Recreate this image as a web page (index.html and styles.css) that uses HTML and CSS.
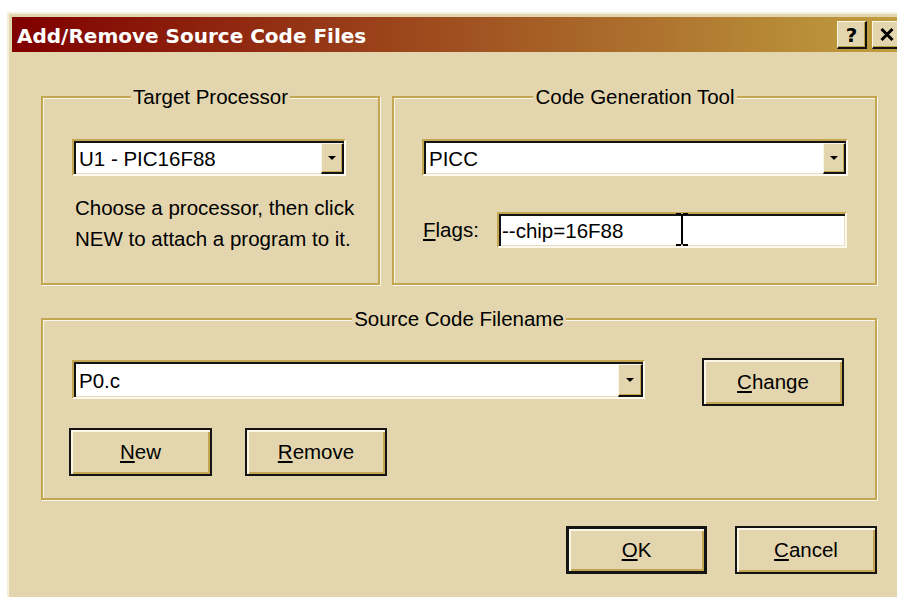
FILE: index.html
```html
<!DOCTYPE html>
<html lang="en">
<head>
<meta charset="utf-8">
<title>Add/Remove Source Code Files</title>
<link rel="stylesheet" href="styles.css">
</head>
<body>
<div class="window">
  <div class="titlebar">
    <span class="title">Add/Remove Source Code Files</span>
    <div class="title-buttons">
      <span class="tbtn tbtn-help">?</span>
      <span class="tbtn tbtn-close">
        <svg width="14" height="13" viewBox="0 0 14 13"><path d="M1.5 1 L12.5 12 M12.5 1 L1.5 12" stroke="#000" stroke-width="3" fill="none"/></svg>
      </span>
    </div>
  </div>

  <div class="client">
    <div class="row-top">
      <fieldset class="group group-target">
        <legend>Target Processor</legend>
        <div class="combo combo-target">
          <span class="combo-text">U1 - PIC16F88</span>
          <span class="drop"><svg width="8" height="4" viewBox="0 0 8 4"><path d="M0 0 H8 L4 4 Z" fill="#000"/></svg></span>
        </div>
        <p class="hint">Choose a processor, then click<br>NEW to attach a program to it.</p>
      </fieldset>

      <fieldset class="group group-tool">
        <legend>Code Generation Tool</legend>
        <div class="combo combo-tool">
          <span class="combo-text">PICC</span>
          <span class="drop"><svg width="8" height="4" viewBox="0 0 8 4"><path d="M0 0 H8 L4 4 Z" fill="#000"/></svg></span>
        </div>
        <div class="flags-row">
          <label class="flags-label"><u>F</u>lags:</label>
          <div class="field">
            <span class="field-text">--chip=16F88</span>
            <svg class="ibeam" width="14" height="33" viewBox="0 0 14 33"><path d="M1 1 H6 M8 1 H13 M7 1.5 V31.5 M1 32 H6 M8 32 H13" stroke="#000" stroke-width="2" fill="none"/></svg>
          </div>
        </div>
      </fieldset>
    </div>

    <fieldset class="group group-source">
      <legend>Source Code Filename</legend>
      <div class="source-row">
        <div class="combo combo-source">
          <span class="combo-text">P0.c</span>
          <span class="drop drop-wide"><svg width="8" height="4" viewBox="0 0 8 4"><path d="M0 0 H8 L4 4 Z" fill="#000"/></svg></span>
        </div>
        <button class="btn btn-change"><u>C</u>hange</button>
      </div>
      <div class="source-actions">
        <button class="btn btn-new"><u>N</u>ew</button>
        <button class="btn btn-remove"><u>R</u>emove</button>
      </div>
    </fieldset>

    <div class="dialog-actions">
      <button class="btn btn-default"><u>O</u>K</button>
      <button class="btn btn-cancel"><u>C</u>ancel</button>
    </div>
  </div>
</div>
</body>
</html>
```

FILE: styles.css
```css
html, body {
  margin: 0;
  height: 100%;
  overflow: hidden;
  background: #ffffff;
}

body {
  box-sizing: border-box;
  padding: 12px 0 0 7px;
  font-family: "Liberation Sans", Arial, sans-serif;
  font-size: 20.5px;
  color: #000;
}

/* dialog frame, continuing past the right and bottom edges */
.window {
  box-sizing: border-box;
  width: 890px;
  height: 585px;
  background: #e3d6ae;
  border-top: 2px solid #f6efdc;
  border-left: 2px solid #f6efdc;
  padding: 3px 0 0 3px;
  display: flex;
  flex-direction: column;
  overflow: hidden;
}

.titlebar {
  box-sizing: border-box;
  width: 893px;
  height: 35px;
  flex: none;
  padding: 0 3px 0 5px;
  background: linear-gradient(to right, #800000, #c0a040);
  display: flex;
  align-items: center;
  justify-content: space-between;
}

.title {
  color: #fff;
  font-family: "DejaVu Sans", Verdana, sans-serif;
  font-weight: bold;
  font-size: 20px;
  line-height: 1;
  margin-top: 2px;
}

.title-buttons {
  display: flex;
  gap: 5px;
  margin-top: 1px;
}

.tbtn {
  box-sizing: border-box;
  width: 30px;
  height: 28px;
  background: #e3d6ae;
  border-style: solid;
  border-width: 1px 2px 2px 1px;
  border-color: #fbf6e6 #111 #111 #fbf6e6;
  box-shadow: inset -1px -1px 0 #c0a040;
  display: flex;
  align-items: center;
  justify-content: center;
  font-family: "DejaVu Sans", Verdana, sans-serif;
  font-weight: bold;
  font-size: 20px;
  line-height: 1;
}

/* client area */
.client {
  width: 836px;
  padding: 34px 0 0 29px;
  display: flex;
  flex-direction: column;
}

.row-top {
  display: flex;
  gap: 12px;
}

.group {
  box-sizing: border-box;
  margin: 0;
  min-width: 0;
  border: 2px solid #c4a650;
  box-shadow: inset 1px 1px 0 #fbf7ea, 1px 1px 0 #fbf7ea;
}

.group legend {
  margin: 0 auto;
  padding: 0 2px;
  line-height: 22px;
  font-size: 20.5px;
  background: #e3d6ae;
}

.group-target {
  width: 339px;
  height: 199px;
  padding: 31px 29px 0;
}

.group-tool {
  width: 485px;
  height: 199px;
  padding: 31px 27px 0 28px;
}

.group-source {
  width: 836px;
  height: 192px;
  margin-top: 23px;
  padding: 28px 26px 0;
}

/* sunken combo boxes and edit fields */
.combo,
.field {
  box-sizing: border-box;
  background: #fff;
  border: 2px solid;
  border-color: #c4a650 #fdf9ee #fdf9ee #c4a650;
  box-shadow: inset 2px 2px 0 #141414, inset -1px -1px 0 #e8ddc0;
  padding: 2px 0 0 2px;
  display: flex;
  align-items: stretch;
}

.combo {
  height: 37px;
}

.combo-target {
  width: 274px;
}

.combo-tool {
  width: 426px;
}

.combo-source {
  width: 573px;
  height: 39px;
  margin: 2px 0 0 3px;
}

.combo-text {
  flex: 1;
  display: flex;
  align-items: center;
  padding-left: 3px;
  white-space: nowrap;
}

.drop {
  box-sizing: border-box;
  width: 23px;
  flex: none;
  background: #e3d6ae;
  border-style: solid;
  border-width: 1px 2px 2px 1px;
  border-color: #fbf6e6 #111 #111 #fbf6e6;
  box-shadow: inset -1px -1px 0 #c4a650;
  display: flex;
  align-items: center;
  justify-content: center;
}

.drop-wide {
  width: 25px;
}

.hint {
  margin: 16px 0 0 3px;
  line-height: 31px;
  white-space: nowrap;
}

.flags-row {
  display: flex;
  align-items: center;
  margin-top: 36px;
}

.flags-label {
  width: 75px;
  padding-left: 1px;
  box-sizing: border-box;
}

.field {
  position: relative;
  width: 350px;
  height: 36px;
}

.field-text {
  display: flex;
  align-items: center;
  padding-left: 1px;
}

/* text cursor resting over the flags field */
.ibeam {
  position: absolute;
  left: 176px;
  top: -1px;
}

/* push buttons */
.btn {
  box-sizing: border-box;
  height: 48px;
  margin: 0;
  padding: 0;
  background: #e3d6ae;
  border: 2px solid #141414;
  box-shadow: inset 2px 2px 0 #fbf6e6, inset -2px -2px 0 #c4a650;
  font-family: "Liberation Sans", Arial, sans-serif;
  font-size: 20.5px;
  color: #000;
}

.btn-default {
  border-width: 3px;
}

.source-row {
  display: flex;
  align-items: flex-start;
}

.btn-change {
  width: 142px;
  margin-left: 57px;
}

.source-actions {
  display: flex;
  gap: 33px;
  margin-top: 22px;
}

.btn-new {
  width: 143px;
}

.btn-remove {
  width: 142px;
}

.dialog-actions {
  display: flex;
  justify-content: flex-end;
  gap: 28px;
  margin-top: 26px;
}

.btn-default {
  width: 141px;
}

.btn-cancel {
  width: 142px;
}
```
